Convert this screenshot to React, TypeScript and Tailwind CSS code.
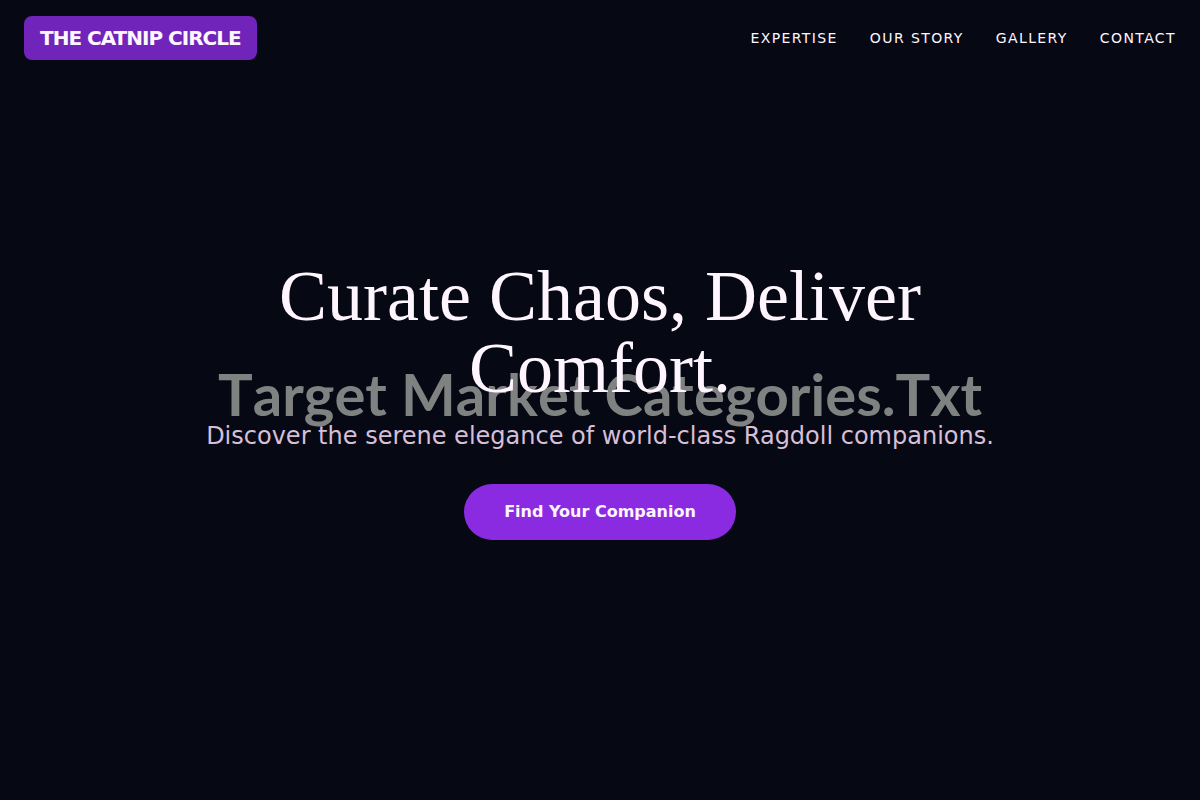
const navLinks = [
  { label: "Expertise", href: "#expertise" },
  { label: "Our Story", href: "#story" },
  { label: "Gallery", href: "#gallery" },
  { label: "Contact", href: "#contact" },
];

export default function App() {
  return (
    <div className="relative flex min-h-screen flex-col bg-[#060914] font-['DejaVu_Sans',sans-serif] text-[#fff5ff]">
      <Header />
      <Hero />
    </div>
  );
}

function Header() {
  return (
    <header className="absolute inset-x-0 top-0 z-10 flex items-center justify-between px-6 py-4">
      <a href="#top" className="rounded-lg bg-[#7024b9] px-4 py-2 text-xl font-bold tracking-tighter uppercase">
        The Catnip Circle
      </a>
      <nav className="flex gap-8">
        {navLinks.map((link) => (
          <a key={link.href} href={link.href} className="text-sm tracking-widest uppercase">
            {link.label}
          </a>
        ))}
      </nav>
    </header>
  );
}

function Hero() {
  return (
    <main id="top" className="relative flex flex-1 items-center justify-center px-6">
      {/* oversized caption behind the headline */}
      <div className="absolute inset-0 flex items-center justify-center pb-3">
        <span className="font-['Lato',sans-serif] text-[58px] leading-none font-bold whitespace-nowrap text-[#808181] [font-kerning:none]">
          Target Market Categories.Txt
        </span>
      </div>
      <div className="relative max-w-4xl text-center">
        <h1 className="mb-4 font-['Liberation_Serif',serif] text-7xl leading-none">
          Curate Chaos, Deliver Comfort.
        </h1>
        <p className="mb-8 text-2xl text-[#d8bfd8]">
          Discover the serene elegance of world-class Ragdoll companions.
        </p>
        <button className="rounded-full bg-[#8a2be2] px-10 py-4 font-bold">Find Your Companion</button>
      </div>
    </main>
  );
}
